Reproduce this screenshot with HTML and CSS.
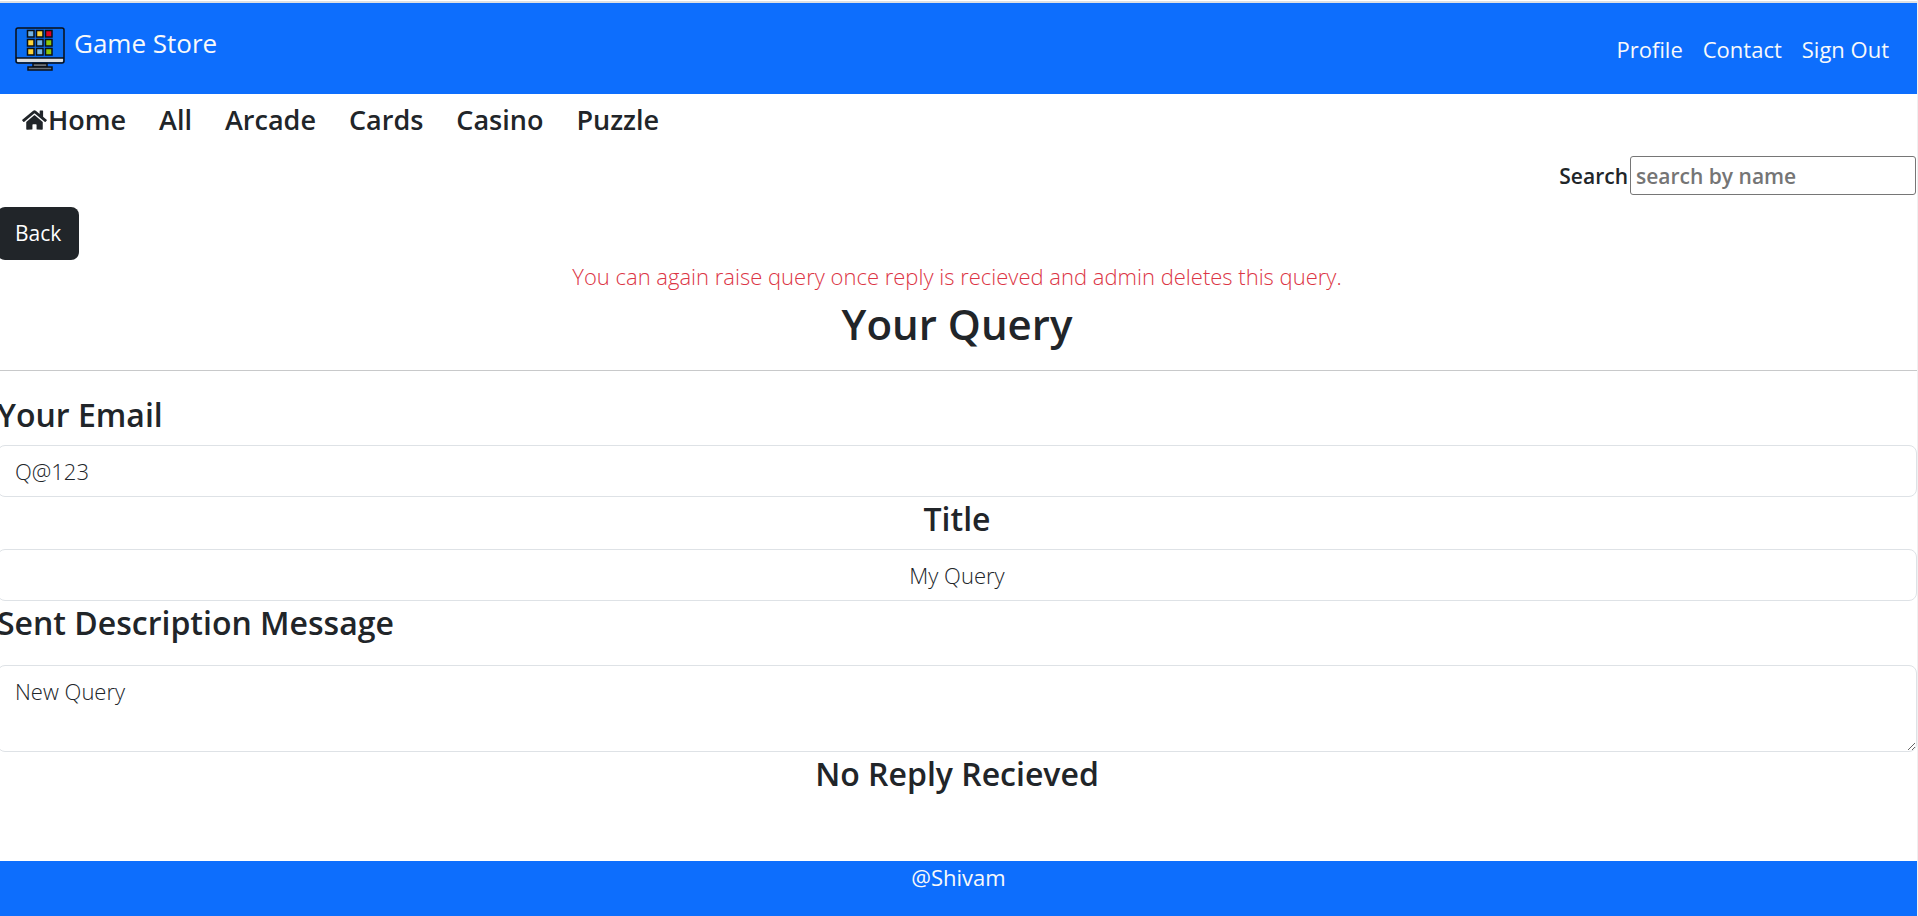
FILE: index.html
```html
<!DOCTYPE html>
<html lang="en">
<head>
<meta charset="utf-8">
<title>Game Store</title>
<link rel="stylesheet" href="styles.css">
</head>
<body>
<header class="topbar">
  <a class="brand" href="#">
    <svg class="brand-logo" viewBox="0 0 50 44" aria-hidden="true">
      <rect x="1" y="1" width="48" height="35" rx="2" fill="#0a6cf0" stroke="#0b0f14" stroke-width="1.500"/>
      <path d="M2 31H48V34Q48 35 47 35H3Q2 35 2 34Z" fill="#d9dcdf"/>
      <path d="M1 31H49" stroke="#0b0f14" stroke-width="1.500"/>
      <path d="M18 36.500H32V40H18Z" fill="#6d7278" stroke="#0b0f14" stroke-width="1.500"/>
      <rect x="13" y="40" width="24" height="3" fill="#6d7278" stroke="#0b0f14" stroke-width="1.500"/>
      <g stroke="#0b0f14" stroke-width="1.500">
        <rect x="12.500" y="3.500" width="6.500" height="6.500" fill="#72b3e4"/>
        <rect x="21.500" y="3.500" width="6.500" height="6.500" fill="#fdd43a"/>
        <rect x="30.500" y="3.500" width="6.500" height="6.500" fill="#e00025"/>
        <rect x="12.500" y="12.500" width="6.500" height="6.500" fill="#fdd43a"/>
        <rect x="21.500" y="12.500" width="6.500" height="6.500" fill="#72b3e4"/>
        <rect x="30.500" y="12.500" width="6.500" height="6.500" fill="#8cc80a"/>
        <rect x="12.500" y="21.500" width="6.500" height="6.500" fill="#fdd43a"/>
        <rect x="21.500" y="21.500" width="6.500" height="6.500" fill="#72b3e4"/>
        <rect x="30.500" y="21.500" width="6.500" height="6.500" fill="#8cc80a"/>
      </g>
    </svg>
    <span>Game Store</span>
  </a>
  <nav class="account" aria-label="Account">
    <a href="#">Profile</a>
    <a href="#">Contact</a>
    <a href="#">Sign Out</a>
  </nav>
</header>
<nav class="categories" aria-label="Categories">
  <a href="#"><svg class="home-icon" viewBox="0 0 576 512" aria-hidden="true"><path fill="currentColor" d="M280.370 148.260L96 300.110V464a16 16 0 0 0 16 16l112.060-.290a16 16 0 0 0 15.920-16V368a16 16 0 0 1 16-16h64a16 16 0 0 1 16 16v95.640a16 16 0 0 0 16 16.050L464 480a16 16 0 0 0 16-16V300L295.670 148.260a12.190 12.190 0 0 0-15.300 0zM571.600 251.470L488 182.560V44.050a12 12 0 0 0-12-12h-56a12 12 0 0 0-12 12v72.610L318.470 43a48 48 0 0 0-61 0L4.340 251.470a12 12 0 0 0-1.600 16.900l25.500 31A12 12 0 0 0 45.150 301l235.220-193.740a12.190 12.190 0 0 1 15.300 0L530.900 301a12 12 0 0 0 16.900-1.600l25.500-31a12 12 0 0 0-1.700-16.930z"/></svg>Home</a>
  <a href="#">All</a>
  <a href="#">Arcade</a>
  <a href="#">Cards</a>
  <a href="#">Casino</a>
  <a href="#">Puzzle</a>
</nav>
<form class="search">
  <label for="search">Search</label>
  <input id="search" type="text" placeholder="search by name">
</form>
<main class="query">
  <button class="back" type="button">Back</button>
  <p class="notice">You can again raise query once reply is recieved and admin deletes this query.</p>
  <h1 class="page-title">Your Query</h1>
  <hr class="rule">
  <label class="heading" for="email">Your Email</label>
  <input class="field" id="email" type="text" value="Q@123" readonly>
  <label class="heading centered" for="title">Title</label>
  <input class="field centered" id="title" type="text" value="My Query" readonly>
  <label class="heading spaced" for="message">Sent Description Message</label>
  <textarea class="field message" id="message" readonly>New Query</textarea>
  <h2 class="heading centered">No Reply Recieved</h2>
</main>
<footer class="footer">@Shivam</footer>
</body>
</html>
```
FILE: styles.css
```css
*, *::before, *::after {
  box-sizing: border-box;
}

body {
  display: flex;
  flex-direction: column;
  min-height: 100vh;
  margin: 0;
  border-right: 1px solid #f0f0f0;
  background: #fff;
  color: #212529;
  font-family: "Segoe UI", "Open Sans", "Noto Sans", sans-serif;
  font-size: 22px;
  line-height: 32px;
}

a {
  color: inherit;
  text-decoration: none;
}

input, textarea, button {
  font: inherit;
  color: inherit;
}

.topbar {
  display: flex;
  justify-content: space-between;
  align-items: center;
  height: 93px;
  margin-top: 1px;
  padding: 0 28px 0 15px;
  border-top: 2px solid #dee0e3;
  background: #0d6efd;
  color: #f8f9fa;
}

.brand {
  display: flex;
  align-items: flex-start;
  gap: 9px;
  font-size: 26px;
}

.brand-logo {
  width: 50px;
  height: 44px;
}

.account {
  display: flex;
  gap: 20px;
}

.categories {
  display: flex;
  gap: 33px;
  padding: 8px 22px;
  font-size: 27px;
  font-weight: 600;
  line-height: 36px;
}

.home-icon {
  width: 25px;
  height: 22px;
  margin-right: 1px;
  vertical-align: -1px;
}

.search {
  display: flex;
  justify-content: flex-end;
  align-items: center;
  gap: 2px;
  margin: 10px 1px 12px 0;
  font-size: 21px;
  font-weight: 600;
}

.search input {
  width: 286px;
  height: 39px;
  padding: 1px 5px;
  border: 1px solid #767676;
  border-radius: 3px;
}

.search input::placeholder {
  color: #757575;
}

.query {
  display: flex;
  flex-direction: column;
  flex: 1;
  margin-left: -3px;
  font-weight: 300;
}

.back {
  align-self: flex-start;
  padding: 10px 18px;
  border: 0;
  border-radius: 8px;
  background: #212529;
  color: #fff;
  font-size: 21px;
  font-weight: 400;
  line-height: 33px;
}

.notice {
  margin: 0;
  color: #dc3545;
  text-align: center;
}

.page-title {
  margin: 5px 0 19px;
  font-size: 42px;
  font-weight: 600;
  line-height: 54px;
  text-align: center;
}

.rule {
  width: 100%;
  margin: 0 0 22px;
  border: 0;
  border-top: 1px solid #c8c9ca;
}

.heading {
  margin: 0 0 8px;
  font-size: 32px;
  font-weight: 600;
  line-height: 44px;
}

.spaced {
  margin-bottom: 20px;
}

.centered {
  text-align: center;
}

.field {
  width: 100%;
  padding: 8px 17px;
  border: 1px solid #dee2e6;
  border-radius: 8px;
  background: #fff;
  line-height: 34px;
}

.message {
  height: 87px;
  resize: vertical;
}

.footer {
  height: 55px;
  background: #0d6efd;
  color: #f8f9fa;
  text-align: center;
}
```
